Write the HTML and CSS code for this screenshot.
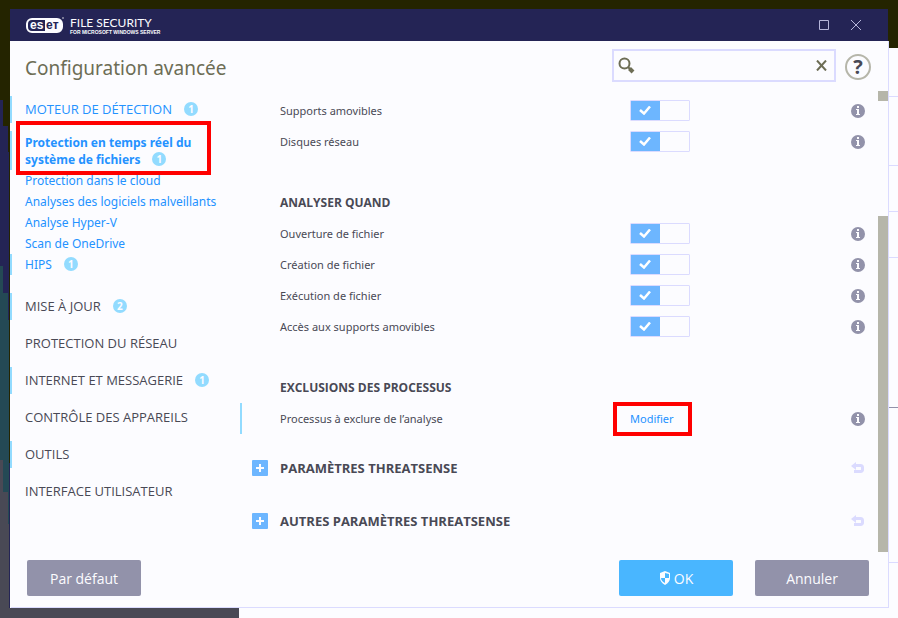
FILE: index.html
```html
<!DOCTYPE html>
<html lang="fr">
  <head>
    <meta charset="UTF-8" />
    <meta name="viewport" content="width=device-width, initial-scale=1.0" />
    <title>Configuration avancée</title>
    <link rel="stylesheet" href="styles.css">
  </head>
  <body>
    <!-- shared icons -->
    <svg class="sprite" width="0" height="0">
      <symbol id="info" viewBox="0 0 14 14">
        <circle cx="7" cy="7" r="7" fill="#9292aa" />
        <path d="M6 2h2v2H6zM5 5h3v5h1v1H5v-1h1V6H5z" fill="#fcfcff" />
      </symbol>
      <symbol id="undo" viewBox="0 0 13 12">
        <path d="M4 3.500H9.500a2 2 0 0 1 2 2v1.500a2 2 0 0 1-2 2.500H3" fill="none" stroke="#dbdbff" stroke-width="3" />
        <path d="M0 4L5 0v8z" fill="#dbdbff" />
      </symbol>
    </svg>

    <div class="window">
      <header class="titlebar">
        <svg class="logo" width="40" height="17" viewBox="0 0 40 17">
          <rect x="2" y="2" width="35" height="13" rx="5" fill="#242455" stroke="#fcfcff" stroke-width="2" />
          <path d="M20 2h12a5 5 0 0 1 5 5v3a5 5 0 0 1-5 5H20z" fill="#fcfcff" />
          <g font-family="Liberation Sans" font-weight="bold" font-size="12">
            <text x="5" y="12" fill="#fcfcff">es</text>
            <text x="21" y="12" fill="#242455">eт</text>
          </g>
          <circle cx="38" cy="1" r="1" fill="#9292aa" />
        </svg>
        <div class="product">
          <span class="product-name">FILE SECURITY</span>
          <span class="product-sub">FOR MICROSOFT WINDOWS SERVER</span>
        </div>
        <button class="win-btn" aria-label="Agrandir">
          <svg width="12" height="12" viewBox="0 0 12 12"><path d="M1.500 1.500h9v9h-9z" fill="none" stroke="#b6b6db" /></svg>
        </button>
        <button class="win-btn" aria-label="Fermer">
          <svg width="12" height="12" viewBox="0 0 12 12"><path d="M1 1l10 10M11 1L1 11" stroke="#b6b6db" /></svg>
        </button>
      </header>

      <div class="heading">
        <h1>Configuration avancée</h1>
        <div class="search">
          <svg width="17" height="17" viewBox="0 0 17 17">
            <circle cx="6.500" cy="6.500" r="5" fill="none" stroke="#6d6d55" stroke-width="2" />
            <path d="M10 10l2 2" stroke="#6d6d55" stroke-width="2" />
            <path d="M11.500 11.500l3.500 3.500" stroke="#6d6d55" stroke-width="4" />
          </svg>
          <input type="text" aria-label="Rechercher">
          <button aria-label="Effacer">
            <svg width="11" height="11" viewBox="0 0 11 11"><path d="M1 0.500l9 10M10 0.500l-9 10" stroke="#6d6d55" stroke-width="2" /></svg>
          </button>
        </div>
        <button class="help" aria-label="Aide">?</button>
      </div>

      <div class="content">
        <nav class="menu">
          <div class="item active changed"><a href="#">MOTEUR DE DÉTECTION</a><span class="count">1</span></div>
          <div class="sub current changed"><a href="#">Protection en temps réel du système de fichiers</a><span class="count">1</span></div>
          <div class="sub"><a href="#">Protection dans le cloud</a></div>
          <div class="sub"><a href="#">Analyses des logiciels malveillants</a></div>
          <div class="sub"><a href="#">Analyse Hyper-V</a></div>
          <div class="sub"><a href="#">Scan de OneDrive</a></div>
          <div class="sub last changed"><a href="#">HIPS</a><span class="count">1</span></div>
          <div class="item changed"><a href="#">MISE À JOUR</a><span class="count">2</span></div>
          <div class="item"><a href="#">PROTECTION DU RÉSEAU</a></div>
          <div class="item changed"><a href="#">INTERNET ET MESSAGERIE</a><span class="count">1</span></div>
          <div class="item"><a href="#">CONTRÔLE DES APPAREILS</a></div>
          <div class="item changed"><a href="#">OUTILS</a></div>
          <div class="item"><a href="#">INTERFACE UTILISATEUR</a></div>
        </nav>

        <main class="settings">
          <div class="row">
            <label for="removable">Supports amovibles</label>
            <input type="checkbox" class="switch" id="removable" checked>
            <svg class="info"><use href="#info" /></svg>
          </div>
          <div class="row">
            <label for="network">Disques réseau</label>
            <input type="checkbox" class="switch" id="network" checked>
            <svg class="info"><use href="#info" /></svg>
          </div>

          <h2>ANALYSER QUAND</h2>
          <div class="row">
            <label for="open">Ouverture de fichier</label>
            <input type="checkbox" class="switch" id="open" checked>
            <svg class="info"><use href="#info" /></svg>
          </div>
          <div class="row">
            <label for="create">Création de fichier</label>
            <input type="checkbox" class="switch" id="create" checked>
            <svg class="info"><use href="#info" /></svg>
          </div>
          <div class="row">
            <label for="execute">Exécution de fichier</label>
            <input type="checkbox" class="switch" id="execute" checked>
            <svg class="info"><use href="#info" /></svg>
          </div>
          <div class="row">
            <label for="access">Accès aux supports amovibles</label>
            <input type="checkbox" class="switch" id="access" checked>
            <svg class="info"><use href="#info" /></svg>
          </div>

          <h2>EXCLUSIONS DES PROCESSUS</h2>
          <div class="row changed">
            <span>Processus à exclure de l’analyse</span>
            <a class="edit" href="#">Modifier</a>
            <svg class="info"><use href="#info" /></svg>
          </div>

          <div class="section">
            <button class="expand" aria-label="Développer"></button>
            <h3>PARAMÈTRES THREATSENSE</h3>
            <svg class="undo"><use href="#undo" /></svg>
          </div>
          <div class="section">
            <button class="expand" aria-label="Développer"></button>
            <h3>AUTRES PARAMÈTRES THREATSENSE</h3>
            <svg class="undo"><use href="#undo" /></svg>
          </div>
        </main>

        <div class="scrollbar"><span class="scroll-top"></span><span class="scroll-thumb"></span></div>
      </div>

      <footer class="actions">
        <button class="btn">Par défaut</button>
        <button class="btn ok">
          <svg width="12" height="14" viewBox="0 0 12 14">
            <path d="M6 0l5 2v5q0 4-5 7q-5-3-5-7V2z" fill="#fcfcff" />
            <path d="M6 2l4 1v4H6zM6 7v5Q2 10 2 7z" fill="#49b6ff" />
          </svg>OK</button>
        <button class="btn">Annuler</button>
      </footer>
    </div>
  </body>
</html>
```

FILE: styles.css
```css
* {
  box-sizing: border-box;
}
body {
  margin: 0;
  min-height: 100vh;
  padding: 9px 10px 11px;
  display: flex;
  /* other windows and the desktop behind the dialog */
  background:
    linear-gradient(#242400, #242400) 0 0 / 100% 9px no-repeat,
    linear-gradient(#242400, #242400) 100% 0 / 10px 48px no-repeat,
    linear-gradient(#242400 100px, #242455 100px 266px, #244955 266px 460px, #494955 460px) 0 0 / 3px 100% no-repeat,
    linear-gradient(#242400 126px, #242455 126px 293px, #244955 293px 492px, #494955 492px) 3px 0 / 5px 100% no-repeat,
    linear-gradient(#242400 152px, #242455 152px 320px, #244955 320px 524px, #494955 524px) 8px 0 / 1px 100% no-repeat,
    linear-gradient(#242400 463px, #242455 463px) 9px 0 / 1px 608px no-repeat,
    linear-gradient(#494955, #494955) 0 100% / 239px 10px no-repeat,
    linear-gradient(transparent 96px, #dbdbff 96px 97px, transparent 97px 165px, #dbdbff 165px 166px, transparent 166px 211px, #dbdbff 211px 212px, transparent 212px 257px, #dbdbff 257px 258px, transparent 258px 407px, #9292aa 407px 408px, transparent 408px 562px, #dbdbff 562px 563px, transparent 563px) 100% 0 / 10px 100% no-repeat,
    #fcfcff;
  font-family: "Open Sans", "Noto Sans", sans-serif;
  font-size: 12px;
  color: #494955;
}
button {
  font-family: inherit;
  padding: 0;
  border: none;
  background: none;
  cursor: pointer;
}
a {
  color: inherit;
  text-decoration: none;
}
svg {
  flex: none;
}
.sprite {
  position: absolute;
}
.window {
  flex: 1;
  display: flex;
  flex-direction: column;
  background-color: #fcfcff;
  box-shadow: 1px 1px 0 #dbdbff;
}

/* title bar */
.titlebar {
  height: 32px;
  padding: 0 26px 0 15px;
  display: flex;
  align-items: center;
  background-color: #242455;
  box-shadow: 1px 0 0 #242400;
}
.product {
  flex: 1;
  margin-left: 5px;
  display: flex;
  flex-direction: column;
  color: #fcfcff;
  font-family: "Liberation Sans", sans-serif;
}
.product-name {
  font-family: Lato, sans-serif;
  font-size: 12px;
  line-height: 13px;
}
.product-sub {
  font-size: 5px;
  line-height: 6px;
  font-weight: bold;
}
.win-btn {
  width: 12px;
  height: 12px;
  margin-left: 20px;
}
.win-btn svg {
  display: block;
}

/* heading and search */
.heading {
  height: 55px;
  padding: 8px 17px 0 15px;
  display: flex;
  align-items: flex-start;
}
h1 {
  flex: 1;
  margin: 3px 0 0;
  font-family: "Noto Sans", sans-serif;
  font-size: 19px;
  line-height: 32px;
  font-weight: normal;
  color: #6d6d55;
}
.search {
  width: 224px;
  height: 33px;
  padding: 0 7px 0 4px;
  display: flex;
  align-items: center;
  border: 2px solid #dbdbff;
}
.search input {
  flex: 1;
  min-width: 0;
  border: none;
  outline: none;
  background: none;
  font: inherit;
}
.search button,
.search svg {
  display: block;
}
.help {
  width: 26px;
  height: 26px;
  margin: 5px 0 0 9px;
  border: 2px solid #b6b6aa;
  border-radius: 50%;
  font-size: 20px;
  line-height: 22px;
  font-weight: bold;
  color: #494955;
}

/* left menu */
.content {
  flex: 1;
  display: flex;
}
.menu {
  width: 230px;
}
.item,
.sub {
  padding: 0 15px 0 13px;
  border-left: 2px solid transparent;
}
.item {
  height: 27px;
  margin-bottom: 10px;
  line-height: 27px;
  font-size: 13px;
}
.sub {
  font-family: "Noto Sans", sans-serif;
  line-height: 21px;
  color: #2492ff;
}
.item.changed,
.sub.changed {
  border-left-color: #92dbff;
}
.item.active {
  margin-bottom: 8px;
  color: #2492ff;
}
.sub.current {
  position: relative;
  padding-top: 3px;
  padding-bottom: 2px;
  padding-right: 30px;
  line-height: 17px;
  font-weight: bold;
}
/* red highlight frame */
.sub.current::after {
  content: "";
  position: absolute;
  top: -10px;
  bottom: -5px;
  left: 4px;
  width: 187px;
  border: 4px solid #ff0000;
  pointer-events: none;
}
.sub.last {
  margin-bottom: 18px;
}
.count {
  width: 14px;
  height: 14px;
  margin-left: 12px;
  display: inline-block;
  vertical-align: 1px;
  border-radius: 50%;
  background-color: #92dbff;
  color: #fcfcff;
  font-size: 10px;
  line-height: 14px;
  font-weight: bold;
  text-align: center;
}

/* settings */
.settings {
  flex: 1;
  margin-top: -1px;
}
.row {
  height: 31px;
  padding: 0 13px 0 38px;
  display: grid;
  grid-template-columns: 350px 1fr 14px;
  align-items: center;
  border-left: 2px solid transparent;
  font-family: "Noto Sans", sans-serif;
  font-size: 11px;
}
.row.changed {
  border-left-color: #92dbff;
}
.info {
  width: 14px;
  height: 14px;
}
.switch {
  appearance: none;
  width: 60px;
  height: 21px;
  margin: 0;
  border: 1px solid #dbdbff;
  border-radius: 1px;
}
.switch:checked {
  background:
    url('data:image/svg+xml,<svg xmlns="http://www.w3.org/2000/svg" width="12" height="9"><path d="M1 4l4 3.500 6-7" fill="none" stroke="white" stroke-width="2.500"/></svg>') 8px 5px no-repeat,
    linear-gradient(#6db6ff, #6db6ff) 0 0 / 29px 100% no-repeat;
}
h2 {
  margin: 30px 0 0 40px;
  font-size: 12px;
  line-height: 31px;
}
.edit {
  justify-self: start;
  margin: -2px 0 -2px -17px;
  padding: 4px 14px 4px 13px;
  border: 4px solid #ff0000;
  line-height: 18px;
  color: #2492ff;
}
.section {
  height: 16px;
  margin-top: 26px;
  margin-bottom: 37px;
  padding: 0 14px 0 12px;
  display: flex;
  align-items: center;
}
.section + .section {
  margin-bottom: 0;
  margin-top: 0;
}
.expand {
  width: 16px;
  height: 16px;
  border-radius: 1px;
  background:
    linear-gradient(#fcfcff, #fcfcff) center / 8px 2px no-repeat,
    linear-gradient(#fcfcff, #fcfcff) center / 2px 8px no-repeat,
    #6db6ff;
}
h3 {
  flex: 1;
  margin: 0 0 0 12px;
  font-size: 13px;
  line-height: 16px;
}
.undo {
  width: 13px;
  height: 12px;
}

/* scroll bar */
.scrollbar {
  width: 10px;
  display: flex;
  flex-direction: column;
}
.scroll-top {
  height: 10px;
  margin-top: -5px;
  background-color: #b6b6aa;
}
.scroll-thumb {
  flex: 1;
  margin-top: 115px;
  background-color: #b6b6aa;
}

/* bottom buttons */
.actions {
  padding: 8px 19px 11px 17px;
  display: flex;
  gap: 22px;
}
.btn {
  width: 114px;
  height: 36px;
  display: flex;
  justify-content: center;
  align-items: center;
  gap: 3px;
  border-radius: 2px;
  background-color: #9292aa;
  color: #fcfcff;
  font-size: 14px;
}
.btn.ok {
  margin-left: auto;
  background-color: #49b6ff;
}
```
